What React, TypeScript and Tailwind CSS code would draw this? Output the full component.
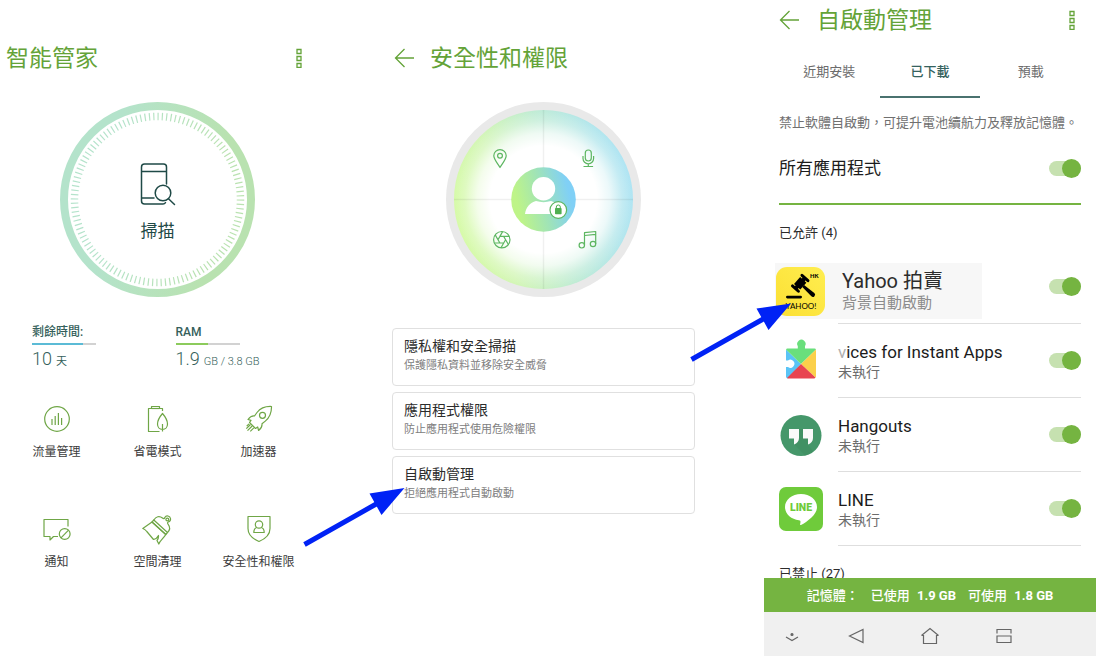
import { useState } from "react";
import type { ReactNode } from "react";

const cards = [
  { title: "隱私權和安全掃描", text: "保護隱私資料並移除安全威脅" },
  { title: "應用程式權限", text: "防止應用程式使用危險權限" },
  { title: "自啟動管理", text: "拒絕應用程式自動啟動" },
];

const tools = [
  { name: "流量管理", icon: <DataIcon /> },
  { name: "省電模式", icon: <BatteryIcon /> },
  { name: "加速器", icon: <RocketIcon /> },
  { name: "通知", icon: <NotificationIcon /> },
  { name: "空間清理", icon: <BrushIcon /> },
  { name: "安全性和權限", icon: <ShieldIcon /> },
];

const tabs = ["近期安裝", "已下載", "預載"];

function ToolSvg({ children }: { children: ReactNode }) {
  return (
    <svg
      viewBox="0 0 32 32"
      className="size-8 text-[#6fa646]"
      fill="none"
      stroke="currentColor"
      strokeWidth="1.2"
      strokeLinejoin="round"
      aria-hidden="true"
    >
      {children}
    </svg>
  );
}

function DataIcon() {
  return (
    <ToolSvg>
      <circle cx="16" cy="16" r="12.3" />
      <path d="M11 16v6M14.2 13v9M17.4 10v12M20.6 15v7" />
    </ToolSvg>
  );
}

function BatteryIcon() {
  return (
    <ToolSvg>
      <path d="M20.5 8V5.5h-3v-2h-8v2h-3v23h11" />
      <path d="M9.5 5.5h8" />
      <path d="M20.5 10.5c3 3.500 5 7 5 10.500 0 3-2 5.500-5 5.500s-5-2.500-5-5.500c0-3.500 2-7 5-10.500zM20.500 21v7.500" />
    </ToolSvg>
  );
}

function RocketIcon() {
  return (
    <ToolSvg>
      <path d="M28.5 3.500c-6-.3-11 1.500-14.500 6L11.500 13c-2.500-.3-4.500.8-6.500 3.500l3 .8-1.500 2.200 6 6 2.200-1.500.9 3.500c2.600-2 3.700-4.200 3.400-6.700l3.300-2.700c4.300-3.600 6.300-8.600 6.200-14.600z" />
      <circle cx="19.5" cy="12.3" r="3" />
      <path d="M7.500 21.500l-4.200 4.200M9.200 23l-4.700 4.700M10.800 24.800l-3.500 3.500M6 20.800l-2.300 2.300" />
    </ToolSvg>
  );
}

function NotificationIcon() {
  return (
    <ToolSvg>
      <path d="M27 13.500V6.500H3v17h6v3.500l3.500-3.500H17" />
      <circle cx="23.7" cy="21" r="5.4" />
      <path d="M20 24.800l7.500-7.600" />
    </ToolSvg>
  );
}

function BrushIcon() {
  return (
    <ToolSvg>
      <path d="M10 9L.8 15.500c1.700.6 2.800 1.500 4 3l6.700 8c2-.3 3.700-1.500 5-4 .2 2.200-.2 3.500-1.500 5l1.800 3.500c1-3 5-6 7-9.500z" />
      <path d="M10 9l13.800 12.500 1.700-2L11.800 7z" />
      <path d="M11.800 7c2.200-3.500 5.500-4.500 8.700-2 1 1 2 .8 2.500-.7 1.200-2.300 5-1.500 5.500 1.200.4 2-1 3-2.300 3.500-1 .5-.8 1.300 0 2.300 2.300 3 1.800 5.700-.7 8.200" />
      <circle cx="25.3" cy="6.5" r="1.4" />
    </ToolSvg>
  );
}

function ShieldIcon() {
  return (
    <ToolSvg>
      <path d="M5 3.500h22v12c0 6-5 10.500-11 13-6-2.500-11-7-11-13z" />
      <circle cx="16" cy="11.5" r="3.7" />
      <path d="M13.800 14.500c-2 .5-3 2-3 5h10.400c0-3-1-4.500-3-5" />
    </ToolSvg>
  );
}

function MoreButton() {
  return (
    <button aria-label="更多" className="text-[#64a338]">
      <svg viewBox="0 0 8 20" className="h-5 w-2" fill="none" stroke="currentColor" strokeWidth="1.3" aria-hidden="true">
        <path d="M2 1.500h4v4H2zM2 8.500h4v4H2zM2 15.500h4v4H2z" />
      </svg>
    </button>
  );
}

function BackButton() {
  return (
    <button aria-label="返回" className="text-[#64a338]">
      <svg viewBox="0 0 20 20" className="size-5" fill="none" stroke="currentColor" strokeWidth="1.3" aria-hidden="true">
        <path d="M10.500 1L1.500 10l9 9M1.500 10H20" />
      </svg>
    </button>
  );
}

function Title({ children }: { children: ReactNode }) {
  return <h1 className="pt-0.5 text-[23px] leading-10 text-[#64a338]">{children}</h1>;
}

function ScanDial() {
  return (
    <button className="relative block size-[195px] shrink-0">
      <svg viewBox="0 0 195 195" className="size-full" fill="none" aria-hidden="true">
        <defs>
          <linearGradient id="ring" gradientUnits="userSpaceOnUse" x1="0" y1="80" x2="195" y2="115">
            <stop offset="0.25" stopColor="#b4e3cb" />
            <stop offset="0.8" stopColor="#b9e2b0" />
          </linearGradient>
        </defs>
        <circle cx="97.5" cy="97.5" r="93.5" stroke="url(#ring)" strokeWidth="8" />
        <circle cx="97.5" cy="97.5" r="83" stroke="url(#ring)" strokeWidth="7.5" pathLength="480" strokeDasharray="1.1 2.9" />
        <g stroke="#1f4a47" strokeWidth="1.5" strokeLinecap="round" strokeLinejoin="round">
          <path d="M106.500 82V65a3 3 0 0 0-3-3H84.500a3 3 0 0 0-3 3v34a3 3 0 0 0 3 3h18.500a3 3 0 0 0 2.500-1.300M81.500 69.500h25M81.500 96h12.500" />
          <circle cx="103" cy="91" r="7.8" />
          <path d="M108.500 96.700l6 5.800" />
        </g>
      </svg>
      <span className="absolute inset-x-0 top-[118px] text-center text-[17px] leading-[22px] text-[#1f4a47]">掃描</span>
    </button>
  );
}

function PermissionDial() {
  return (
    <svg viewBox="0 0 195 195" className="size-[195px] shrink-0" fill="none" role="img" aria-label="權限">
      <defs>
        <linearGradient id="wheel" x1="0" y1="0.62" x2="1" y2="0.38">
          <stop offset="0" stopColor="#d6fba6" />
          <stop offset="0.25" stopColor="#d3f6b6" />
          <stop offset="0.55" stopColor="#c0ecd3" />
          <stop offset="0.85" stopColor="#b2e6ec" />
          <stop offset="1" stopColor="#aee4f4" />
        </linearGradient>
        <radialGradient id="glow">
          <stop offset="0.6" stopColor="#fff" />
          <stop offset="0.74" stopColor="#fff" stopOpacity="0.75" />
          <stop offset="0.88" stopColor="#fff" stopOpacity="0.25" />
          <stop offset="1" stopColor="#fff" stopOpacity="0" />
        </radialGradient>
        <linearGradient id="avatar" x1="0" y1="0.62" x2="1" y2="0.38">
          <stop offset="0.1" stopColor="#bef488" />
          <stop offset="0.5" stopColor="#9fe3b8" />
          <stop offset="0.9" stopColor="#80d0f6" />
        </linearGradient>
      </defs>
      <circle cx="97.5" cy="97.5" r="97.5" fill="#e9e9e9" />
      <circle cx="97.5" cy="97.5" r="89.5" fill="url(#wheel)" />
      <circle cx="97.5" cy="97.5" r="89.5" fill="url(#glow)" />
      <path d="M97.500 8v179M8 97.500h179" stroke="#000" strokeOpacity="0.06" strokeWidth="1.5" />
      <circle cx="97.5" cy="97.5" r="32.3" fill="url(#avatar)" />
      <circle cx="97.5" cy="86.8" r="11.7" fill="#fff" />
      <path d="M79 112c1-7 5-11.500 11-13 5 1.500 10 1.500 15 0 6 1.500 10 6 11 13z" fill="#fff" />
      <circle cx="112.3" cy="108" r="8.3" fill="#fff" stroke="#5db661" strokeWidth="1.2" />
      <rect x="109" y="106" width="6.6" height="6.2" rx="0.8" fill="#4fae50" />
      <path d="M110.300 106.500v-1.500a2 2 0 0 1 4 0v1.500" stroke="#4fae50" strokeWidth="1" />
      <g stroke="#5db661" strokeWidth="1.2" strokeLinejoin="round">
        <path d="M54 65.500c-3.500-5.500-6.200-8.500-6.200-11.700a6.200 6.200 0 0 1 12.400 0c0 3.200-2.700 6.200-6.200 11.700z" />
        <circle cx="54" cy="53.8" r="2.4" />
        <rect x="139.3" y="48" width="6" height="11" rx="3" />
        <path d="M137 54v2.500a5.300 5.300 0 0 0 10.600 0V54M142.300 62v2.800M137.500 64.500h9.600" />
        <circle cx="55.8" cy="137.7" r="8.2" />
        <path d="M59.600 137.700l-1.900 3.300h-3.800l-1.900-3.300 1.900-3.300h3.800zM57.700 134.400h5.500M59.600 137.700l2.800 4.800M57.700 141l-2.700 4.800M53.900 141h-5.500M52 137.700l-2.800-4.800M53.900 134.400l2.700-4.800" />
        <circle cx="135.8" cy="143.3" r="2.7" />
        <circle cx="147" cy="142" r="2.7" />
        <path d="M138.500 143.300V130.700l11.200-1.200V142M138.500 133.500l11.200-1.200" />
      </g>
    </svg>
  );
}

function Stat({ label, percent, color, children }: { label: string; percent: number; color: string; children: ReactNode }) {
  return (
    <div>
      <p className="text-xs leading-[18px] font-medium text-[#355f5b]">{label}</p>
      <div className="mt-0.5 h-0.5 w-16 bg-[#d2d2d2]">
        <div className={color} style={{ width: `${percent}%` }} />
      </div>
      <p className="text-[#355f5b]">{children}</p>
    </div>
  );
}

function Switch({ id }: { id: string }) {
  const [on, setOn] = useState(true);
  return (
    <input
      id={id}
      type="checkbox"
      role="switch"
      checked={on}
      onChange={(e) => setOn(e.target.checked)}
      className="relative h-[15px] w-8 shrink-0 appearance-none rounded-full bg-gray-300 before:absolute before:-top-0.5 before:left-0 before:size-[19px] before:rounded-full before:bg-gray-50 checked:bg-[#c6e1b0] checked:before:right-0 checked:before:left-auto checked:before:bg-[#75b441]"
    />
  );
}

function YahooIcon() {
  return (
    <svg viewBox="0 0 49 49" className="size-[49px] shrink-0" aria-hidden="true">
      <defs>
        <linearGradient id="yellow" x1="0" y1="1" x2="1" y2="0">
          <stop offset="0" stopColor="#fbdf33" />
          <stop offset="1" stopColor="#ffee50" />
        </linearGradient>
      </defs>
      <rect width="49" height="49" rx="11" fill="url(#yellow)" />
      <rect x="10" y="28.7" width="16" height="2.8" rx="1.4" />
      <g transform="translate(24.2 16.3) rotate(-48)">
        <rect x="-4.6" y="-4.2" width="9.2" height="8.4" />
        <rect x="-8.6" y="-5.5" width="3" height="11" rx="1.5" />
        <rect x="5.6" y="-5.5" width="3" height="11" rx="1.5" />
        <rect x="-6.5" y="-2" width="13" height="4" />
        <path d="M-1.300 4h2.600l.9 13a2 2 0 0 1-4.400 0z" />
      </g>
      <text x="34" y="10.5" fontFamily="Lato" fontSize="5.8" fontWeight="900">HK</text>
      <text x="9.5" y="42" fontFamily="Lato" fontSize="8" fontWeight="400">YAHOO!</text>
    </svg>
  );
}

function InstantIcon() {
  return (
    <svg viewBox="0 3 44 44" className="size-11 shrink-0" aria-hidden="true">
      <path d="M22 28L7 13.500V40.500a2 2 0 0 0 2 2z" fill="#5ac4f6" />
      <path d="M7 13.500L22 28 37 13.500a1.500 1.500 0 0 0-1.500-1H26V10a4.200 4.200 0 1 0-7.200 0v2.500H8.500a1.500 1.500 0 0 0-1.500 1z" fill="#69df7c" />
      <path d="M37 13.500L22 28l14.500 13.500c.3-.3.500-.6.500-1z" fill="#fbd04b" />
      <path d="M22 28L8 42c.3.300.6.500 1 .500h26a2 2 0 0 0 1.500-1z" fill="#e84450" />
      <path d="M7 24.500h2a4 4 0 1 1 0 6.500H7z" fill="#fff" />
    </svg>
  );
}

function HangoutsIcon() {
  return (
    <svg viewBox="0 0 44 44" className="size-11 shrink-0" aria-hidden="true">
      <circle cx="22" cy="22.5" r="20.5" fill="#45976a" />
      <path d="M20 16l14 0v9l-5 6.500 5 7a20.500 20.500 0 0 1-8 4L15 31z" fill="#3b8a5d" opacity="0.4" />
      <path d="M10 16h10v9c0 3-2 5.500-5 6.500v-6h-5zM24 16h10v9c0 3-2 5.500-5 6.500v-6h-5z" fill="#fafafa" />
    </svg>
  );
}

function LineIcon() {
  return (
    <svg viewBox="0 0 44 44" className="size-11 shrink-0" aria-hidden="true">
      <rect width="44" height="44" rx="7" fill="#6fcb3b" />
      <path d="M22 7c9 0 16 5.700 16 13 0 4-2 7-5.500 10.500-3.500 3.300-7.500 6-10.500 7.500-1 .4-1-.3-.8-1.300.4-2 .7-3.200-1.200-3.500C12 32.300 6 27 6 20 6 12.700 13 7 22 7z" fill="#fff" />
      <text x="22" y="24" textAnchor="middle" fontFamily="Roboto" fontSize="10.5" fontWeight="900" fill="#6fcb3b">LINE</text>
    </svg>
  );
}

function AppRow({ id, name, icon }: { id: string; name: ReactNode; icon: ReactNode }) {
  return (
    <li>
      <div className="flex h-[73px] items-center">
        {icon}
        <label htmlFor={id} className="ml-[15px] flex-1 pt-0.5">
          <span className="block text-[17px] leading-5 text-[#1c1c1c]">{name}</span>
          <span className="block text-sm leading-5 text-[#6c6c6c]">未執行</span>
        </label>
        <Switch id={id} />
      </div>
      <div className="ml-[59px] border-b border-[#dedede]" />
    </li>
  );
}

function ManagerScreen() {
  return (
    <section className="flex flex-col pt-[38px] pr-[71px]">
      <header className="flex h-10 items-center justify-between pr-3 pl-[6px]">
        <Title>智能管家</Title>
        <MoreButton />
      </header>
      <div className="mt-6 flex justify-center">
        <ScanDial />
      </div>
      <div className="mt-[26px] grid grid-cols-2 gap-1 pl-8">
        <Stat label="剩餘時間:" percent={79} color="h-full bg-[#5bbbd6]">
          <span className="text-lg leading-7 font-light">10</span> <span className="text-[11px]">天</span>
        </Stat>
        <Stat label="RAM" percent={50} color="h-full bg-[#8ccb5c]">
          <span className="text-lg leading-7 font-light">1.9</span>{" "}
          <span className="text-[11px] font-light">GB / 3.8 GB</span>
        </Stat>
      </div>
      <div className="mt-[30px] grid grid-cols-3 gap-y-[52px] px-[6px]">
        {tools.map((tool) => (
          <button key={tool.name} className="flex flex-col items-center gap-2">
            {tool.icon}
            <span className="text-xs leading-[18px] whitespace-nowrap text-[#3c3c3c]">{tool.name}</span>
          </button>
        ))}
      </div>
    </section>
  );
}

function SecurityScreen() {
  return (
    <section className="flex flex-col pt-[38px] pr-[63px]">
      <header className="flex h-10 items-center gap-4 pl-2">
        <BackButton />
        <Title>安全性和權限</Title>
      </header>
      <div className="mt-6 flex justify-center">
        <PermissionDial />
      </div>
      <div className="mt-[31px] flex flex-col gap-[6px] px-[6px]">
        {cards.map((card) => (
          <button key={card.title} className="h-[58px] rounded border border-[#e0e0e0] px-[11px] text-left">
            <span className="block text-sm leading-5 text-[#2c2c2c]">{card.title}</span>
            <span className="block pb-0.5 text-[11px] leading-5 text-[#808080]">{card.text}</span>
          </button>
        ))}
      </div>
    </section>
  );
}

function AutoStartScreen() {
  const [tab, setTab] = useState("已下載");

  return (
    <section className="flex h-screen flex-col">
      <div className="min-h-0 flex-1 overflow-hidden px-[15px]">
        <header className="flex h-10 items-center">
          <BackButton />
          <div className="ml-[18px] flex-1">
            <Title>自啟動管理</Title>
          </div>
          <div className="mr-[5px] flex">
            <MoreButton />
          </div>
        </header>
        <div role="tablist" className="grid h-[58px] grid-cols-3 text-[13px]">
          {tabs.map((name) => (
            <button
              key={name}
              role="tab"
              aria-selected={tab === name}
              onClick={() => setTab(name)}
              className={
                tab === name
                  ? "border-b-2 border-[#4a726f] pt-2 font-medium text-[#35625e]"
                  : "border-b-2 border-transparent pt-2 text-[#6c6c6c]"
              }
            >
              {name}
            </button>
          ))}
        </div>
        <p className="text-[13px] leading-[50px] whitespace-nowrap text-[#707070]">
          禁止軟體自啟動，可提升電池續航力及釋放記憶體。
        </p>
        <div className="flex h-[57px] items-center justify-between border-b-2 border-[#75b441] pb-[15px]">
          <label htmlFor="all" className="pt-0.5 text-[17px] text-[#1c1c1c]">
            所有應用程式
          </label>
          <Switch id="all" />
        </div>
        <h2 className="h-[45px] pt-2.5 text-[13px] leading-9 text-[#2c2c2c]">已允許 (4)</h2>
        <ul>
          <li>
            <div className="flex h-[73px] items-center justify-between">
              <div className="mb-1 -ml-1 flex h-14 w-[207px] items-center gap-[17px] self-end bg-[#f7f7f7] pl-px">
                <YahooIcon />
                <label htmlFor="yahoo">
                  <span className="block text-xl leading-6 text-[#2c2c2c]">Yahoo 拍賣</span>
                  <span className="block text-[15px] leading-5 text-[#8c8c8c]">背景自動啟動</span>
                </label>
              </div>
              <Switch id="yahoo" />
            </div>
            <div className="ml-[59px] border-b border-[#dedede]" />
          </li>
          <AppRow
            id="instant"
            icon={<InstantIcon />}
            name={
              <>
                <span className="text-[#b0b0b0]">v</span>ices for Instant Apps
              </>
            }
          />
          <AppRow id="hangouts" icon={<HangoutsIcon />} name="Hangouts" />
          <AppRow id="line" icon={<LineIcon />} name="LINE" />
        </ul>
        <h2 className="h-[45px] pt-2.5 text-[13px] leading-9 text-[#2c2c2c]">已禁止 (27)</h2>
      </div>

      <div className="flex h-[34px] shrink-0 items-center justify-center gap-3 bg-[#75b441] pt-0.5 text-[13px] font-medium text-white">
        <span>記憶體：</span>
        <span>
          已使用 <b className="ml-1 font-bold">1.9 GB</b>
        </span>
        <span>
          可使用 <b className="ml-1 font-bold">1.8 GB</b>
        </span>
      </div>

      <nav className="flex h-11 shrink-0 items-center bg-[#f0f0f0] pt-1 pl-[18px] text-[#666]">
        <button aria-label="隱藏">
          <svg viewBox="0 0 20 20" className="size-5" fill="none" stroke="currentColor" strokeWidth="1.2" aria-hidden="true">
            <path d="M4 11l6 3.500 6-3.500" />
            <circle cx="10" cy="8.5" r="1" fill="currentColor" />
          </svg>
        </button>
        <button aria-label="返回" className="ml-11">
          <svg viewBox="0 0 20 20" className="size-5" fill="none" stroke="currentColor" strokeWidth="1.2" aria-hidden="true">
            <path d="M17 3.500v13L3.500 10z" />
          </svg>
        </button>
        <button aria-label="首頁" className="ml-[54px]">
          <svg viewBox="0 0 20 20" className="size-5" fill="none" stroke="currentColor" strokeWidth="1.2" aria-hidden="true">
            <path d="M1.500 9.500L10 2.500l8.500 7M1.500 9.500h2V17.500h13v-8h2" />
          </svg>
        </button>
        <button aria-label="最近使用" className="ml-[54px]">
          <svg viewBox="0 0 20 20" className="size-5" fill="none" stroke="currentColor" strokeWidth="1.2" aria-hidden="true">
            <path d="M3 7.500V3.500h14v4M3 10h14v6.500H3z" />
          </svg>
        </button>
      </nav>
    </section>
  );
}

export default function App() {
  return (
    <main className="relative grid min-h-screen grid-cols-[minmax(0,386fr)_minmax(0,378fr)_minmax(0,332fr)] bg-white pr-1 font-[Roboto,'Noto_Sans_CJK_TC',sans-serif]">
      <ManagerScreen />
      <SecurityScreen />
      <AutoStartScreen />

      {/* Arrows from one screen to the next */}
      <svg
        viewBox="0 0 1100 656"
        preserveAspectRatio="none"
        className="pointer-events-none absolute inset-0 h-full w-full"
        fill="#0022f5"
        stroke="#0022f5"
        aria-hidden="true"
      >
        <path d="M304.500 544.500L378 503M691.500 359.500L765 318" strokeWidth="5" />
        <path d="M404.500 488L369.500 493.500 381.500 515zM791 303.500L756.500 308.500 768.500 330z" stroke="none" />
      </svg>
    </main>
  );
}
